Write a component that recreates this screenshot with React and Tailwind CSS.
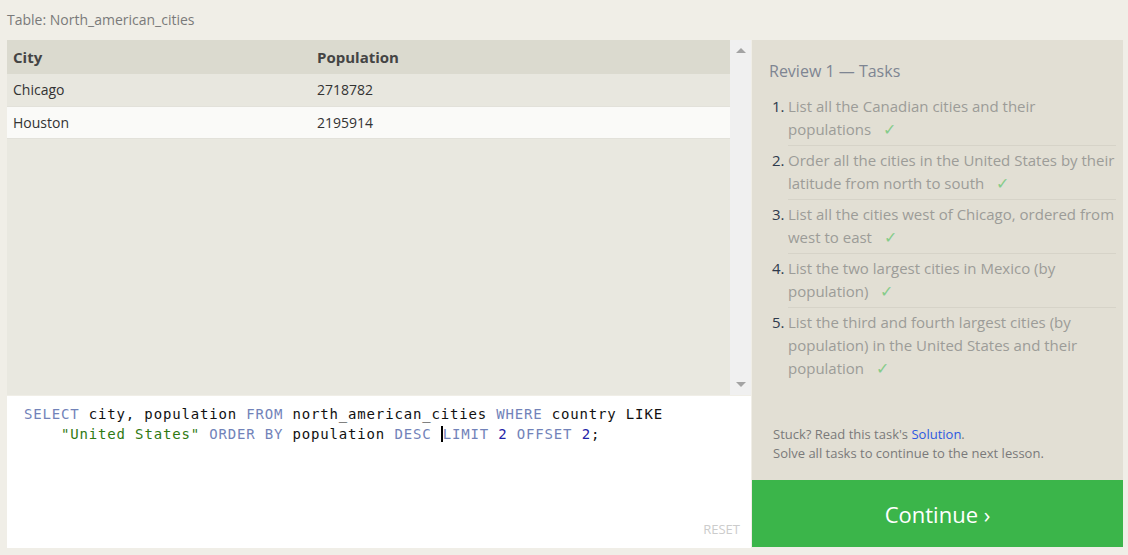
import React from 'react';

const tasks = [
  'List all the Canadian cities and their populations',
  'Order all the cities in the United States by their latitude from north to south',
  'List all the cities west of Chicago, ordered from west to east',
  'List the two largest cities in Mexico (by population)',
  'List the third and fourth largest cities (by population) in the United States and their population',
];

const rows = [
  { city: 'Chicago', population: '2718782', bg: 'bg-[#e8e7df]' },
  { city: 'Houston', population: '2195914', bg: 'bg-[#fafaf8]' },
];

const sans = { fontFamily: '"Open Sans", "Noto Sans", sans-serif' };

function Kw({ children }) {
  return <span className="text-[#7283b9]">{children}</span>;
}

function Num({ children }) {
  return <span className="text-[#1f24a8]">{children}</span>;
}

export default function App() {
  return (
    <div className="h-[555px] w-[1128px] overflow-hidden bg-[#f0eee7]" style={sans}>
      <div className="px-[7px] pt-[10px] text-[14px] leading-[20px] text-[#7a7a7a]">Table: North_american_cities</div>

      <div className="mt-[10px] flex pl-[7px]">
        <div className="flex w-[744px] flex-col">
          {/* result table */}
          <div className="flex h-[355px]">
            <div className="flex-1 bg-[#e9e8e0]">
              <table className="w-full border-collapse text-left">
                <thead>
                  <tr className="h-[34px] bg-[#dbdacf] text-[15px] font-bold text-[#444]">
                    <th className="w-[304px] px-[6px]">City</th>
                    <th className="px-[6px]">Population</th>
                  </tr>
                </thead>
                <tbody className="text-[14px] text-[#333]">
                  {rows.map((row) => (
                    <tr key={row.city} className={`h-[32px] border-b border-[#e2e1da] ${row.bg}`}>
                      <td className="px-[6px]">{row.city}</td>
                      <td className="px-[6px]">{row.population}</td>
                    </tr>
                  ))}
                </tbody>
              </table>
            </div>
            <div className="flex w-[21px] flex-col items-center justify-between bg-[#f0f0f0] py-[8px]">
              <span className="h-0 w-0 border-x-[5px] border-b-[5px] border-x-transparent border-b-[#a3a3a3]" />
              <span className="h-0 w-0 border-x-[5px] border-t-[5px] border-x-transparent border-t-[#a3a3a3]" />
            </div>
          </div>

          {/* editor */}
          <div className="relative mt-px h-[152px] bg-white px-[17px] pt-[8px]">
            <pre
              className="text-[14px] leading-[20px] tracking-[0.83px] text-[#111]"
              style={{ fontFamily: '"DejaVu Sans Mono", "Liberation Mono", monospace' }}
            >
              <Kw>SELECT</Kw> city, population <Kw>FROM</Kw> north_american_cities <Kw>WHERE</Kw> country LIKE
              {'\n    '}
              <span className="text-[#2f7a12]">"United States"</span> <Kw>ORDER BY</Kw> population <Kw>DESC</Kw>{' '}
              <span className="border-l-2 border-black">
                <Kw>LIMIT</Kw>
              </span>{' '}
              <Num>2</Num> <Kw>OFFSET</Kw> <Num>2</Num>;
            </pre>
            <div className="absolute right-[11px] bottom-[9px] text-[13px] text-[#cccccc]">RESET</div>
          </div>
        </div>

        {/* tasks */}
        <div className="ml-px flex w-[371px] flex-col">
          <div className="flex h-[440px] flex-col justify-between bg-[#e2dfd4] pl-[17px] pr-[7px]">
            <div>
              <h2 className="pt-[20px] text-[16px] leading-[22px] text-[#7e8592]">Review 1 — Tasks</h2>
              <ol className="mt-[10px] text-[15px] leading-[23px] text-[#9c9c98]">
                {tasks.map((task, i) => (
                  <li key={task} className="flex">
                    <span className="w-[19px] shrink-0 pl-[3px] pt-[3px] text-[#2e3a4c]">{i + 1}.</span>
                    <div
                      className={`flex-1 pb-[4px] pt-[3px] ${i < tasks.length - 1 ? 'border-b border-[#d6d3c8]' : ''}`}
                    >
                      {task}
                      <span className="ml-[12px] inline-block text-[16px] leading-none text-[#86cc8a]">✓</span>
                    </div>
                  </li>
                ))}
              </ol>
            </div>
            <div className="pb-[17px] pl-[4px] text-[13px] leading-[19px] text-[#7a7a7a]">
              <p>
                Stuck? Read this task's <span className="text-[#2d58e0]">Solution</span>.
              </p>
              <p>Solve all tasks to continue to the next lesson.</p>
            </div>
          </div>
          <button className="flex h-[67px] items-center justify-center bg-[#3bb54a] pt-[2px] text-[22px] text-white">
            Continue ›
          </button>
        </div>
      </div>
    </div>
  );
}
